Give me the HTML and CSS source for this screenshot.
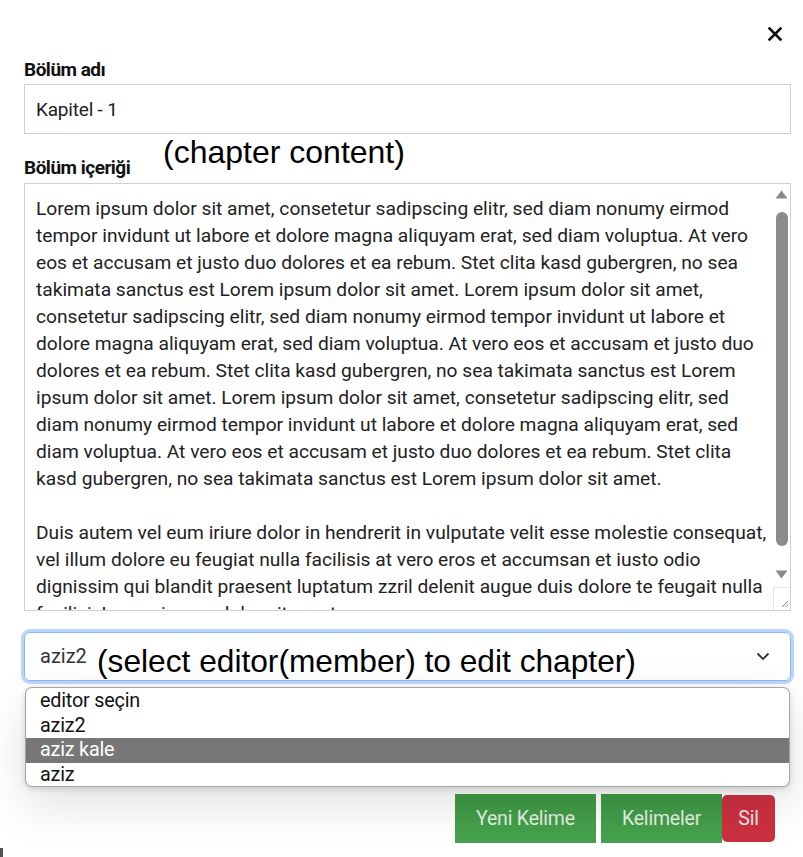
FILE: index.html
```html
<!DOCTYPE html>
<html lang="tr">
<head>
<meta charset="utf-8">
<title>Bölüm düzenle</title>
<link rel="stylesheet" href="styles.css">
</head>
<body>
<div class="modal">
  <div class="modal-header">
    <button class="close" aria-label="Kapat">
      <svg width="14" height="14" viewBox="0 0 14 14"><path d="M1.5 1.5 L12.5 12.5 M12.5 1.5 L1.5 12.5" stroke="#111" stroke-width="2.6" stroke-linecap="square"/></svg>
    </button>
  </div>
  <label class="label label-name">Bölüm adı</label>
  <input class="input" type="text" value="Kapitel - 1">
  <div class="label-row">
    <label class="label label-content">Bölüm içeriği</label>
    <span class="note note-content">(chapter content)</span>
  </div>
  <div class="textarea-box">
    <textarea class="textarea">Lorem ipsum dolor sit amet, consetetur sadipscing elitr, sed diam nonumy eirmod tempor invidunt ut labore et dolore magna aliquyam erat, sed diam voluptua. At vero eos et accusam et justo duo dolores et ea rebum. Stet clita kasd gubergren, no sea takimata sanctus est Lorem ipsum dolor sit amet. Lorem ipsum dolor sit amet, consetetur sadipscing elitr, sed diam nonumy eirmod tempor invidunt ut labore et dolore magna aliquyam erat, sed diam voluptua. At vero eos et accusam et justo duo dolores et ea rebum. Stet clita kasd gubergren, no sea takimata sanctus est Lorem ipsum dolor sit amet. Lorem ipsum dolor sit amet, consetetur sadipscing elitr, sed diam nonumy eirmod tempor invidunt ut labore et dolore magna aliquyam erat, sed diam voluptua. At vero eos et accusam et justo duo dolores et ea rebum. Stet clita kasd gubergren, no sea takimata sanctus est Lorem ipsum dolor sit amet.

Duis autem vel eum iriure dolor in hendrerit in vulputate velit esse molestie consequat, vel illum dolore eu feugiat nulla facilisis at vero eros et accumsan et iusto odio dignissim qui blandit praesent luptatum zzril delenit augue duis dolore te feugait nulla facilisi. Lorem ipsum dolor sit amet.</textarea>
    <div class="scrollbar">
      <svg class="sb-arrow" width="13" height="9" viewBox="0 0 13 9"><path d="M6.5 0.5 L12.5 8.5 L0.5 8.5 Z" fill="#8a8a8a"/></svg>
      <div class="sb-thumb"></div>
      <svg class="sb-arrow sb-down" width="13" height="9" viewBox="0 0 13 9"><path d="M0.5 0.5 L12.5 0.5 L6.5 8.5 Z" fill="#8a8a8a"/></svg>
      <div class="sb-corner">
        <svg width="10" height="10" viewBox="0 0 10 10"><path d="M9 3 L3 9 M9 6.5 L6.5 9" stroke="#8a8a8a" stroke-width="1"/></svg>
      </div>
    </div>
  </div>
  <div class="select">
    <span class="select-value">aziz2</span>
    <span class="note note-select">(select editor(member) to edit chapter)</span>
    <svg class="chevron" width="14" height="9" viewBox="0 0 14 9"><path d="M1.5 1.5 L7 7 L12.5 1.5" fill="none" stroke="#333" stroke-width="1.8"/></svg>
  </div>
  <ul class="options">
    <li class="option">editor seçin</li>
    <li class="option">aziz2</li>
    <li class="option option-active">aziz kale</li>
    <li class="option">aziz</li>
  </ul>
  <div class="actions">
    <button class="btn btn-green btn-new">Yeni Kelime</button>
    <button class="btn btn-green btn-words">Kelimeler</button>
    <button class="btn btn-red">Sil</button>
  </div>
</div>
<div class="corner-mark"></div>
</body>
</html>
```

FILE: styles.css
```css
* { box-sizing: border-box; }
html, body {
  margin: 0;
  padding: 0;
  background: #ffffff;
  height: 857px;
  overflow: hidden;
}
body {
  font-family: Roboto, "Noto Sans", sans-serif;
  color: #212529;
  position: relative;
}
.modal {
  padding: 0 12px 0 24px;
  display: flex;
  flex-direction: column;
}
.modal-header {
  height: 58px;
  display: flex;
  justify-content: flex-end;
  align-items: flex-start;
  padding-top: 27px;
  padding-right: 9px;
}
.close {
  border: 0;
  background: none;
  padding: 0;
  width: 14px;
  height: 14px;
  display: block;
}
.close svg { display: block; }
.label {
  display: block;
  font-weight: 700;
  font-size: 19px;
  color: #111;
  letter-spacing: -0.5px;
}
.label-name {
  height: 26px;
  line-height: 24px;
}
.input {
  height: 50px;
  border: 1px solid #cfcfcf;
  border-radius: 0;
  padding: 0 11px;
  font-family: Roboto, sans-serif;
  font-size: 19px;
  color: #222;
  letter-spacing: -0.2px;
  outline: none;
  width: 100%;
}
.label-row {
  height: 49px;
  position: relative;
  display: flex;
  align-items: flex-end;
  padding-bottom: 3px;
}
.label-content {
  line-height: 24px;
}
.note {
  position: absolute;
  font-family: "Liberation Sans", Arial, sans-serif;
  font-size: 32px;
  color: #000;
  white-space: nowrap;
  font-weight: 400;
  letter-spacing: 0;
  line-height: 37px;
}
.note-content {
  left: 139px;
  top: 0;
}
.textarea-box {
  height: 428px;
  border: 1px solid #cfcfcf;
  display: flex;
}
.textarea {
  flex: 1 1 0;
  min-width: 0;
  height: 100%;
  border: 0;
  padding: 11px 6px 11px 11px;
  font-family: Roboto, sans-serif;
  font-size: 19.2px;
  line-height: 27px;
  color: #222;
  resize: none;
  outline: none;
  overflow: hidden;
  background: #fff;
}
.scrollbar {
  flex: none;
  width: 17px;
  display: flex;
  flex-direction: column;
  align-items: center;
  padding-top: 6px;
}
.sb-arrow { display: block; flex: none; }
.sb-thumb {
  flex: none;
  width: 12px;
  height: 334px;
  margin-top: 13px;
  border-radius: 6px;
  background: #8c8c8c;
}
.sb-down {
  margin-top: 24px;
}
.sb-corner {
  margin-top: auto;
  align-self: stretch;
  height: 23px;
  border-top: 1px solid #e4e4e4;
  border-left: 1px solid #e4e4e4;
  display: flex;
  align-items: flex-end;
  justify-content: flex-end;
  padding: 0 1px 2px 0;
}
.sb-corner svg { display: block; }
.select {
  margin-top: 21px;
  height: 49px;
  border: 1px solid #86b7fe;
  border-radius: 6px;
  box-shadow: 0 0 0 3px #bcd5fb;
  position: relative;
  display: flex;
  align-items: center;
  padding: 0 15px;
}
.select-value {
  font-size: 20px;
  color: #333;
  margin-top: -2px;
}
.note-select {
  left: 72px;
  top: 10px;
  font-size: 31.7px;
}
.chevron {
  margin-left: auto;
  margin-right: 5px;
}
.options {
  list-style: none;
  margin: 6px 1px 0 1px;
  padding: 1px 0;
  height: 100px;
  border: 1px solid #a6a6a6;
  border-left-color: #9aaa9a;
  border-radius: 7px;
  background: #fff;
  overflow: hidden;
  box-shadow: 0 18px 50px rgba(0,0,0,0.12), 0 2px 6px rgba(0,0,0,0.15);
  position: relative;
  z-index: 1;
}
.option {
  height: 24.5px;
  line-height: 24px;
  padding: 0 14px;
  font-size: 19.8px;
  color: #111;
  letter-spacing: -0.2px;
}
.option-active {
  background: #777777;
  color: #fff;
}
.actions {
  margin-top: 7px;
  display: flex;
  justify-content: flex-end;
  align-items: center;
  padding-right: 16px;
}
.btn {
  border: 0;
  font-family: Roboto, sans-serif;
  font-size: 19.5px;
  color: #e3efe3;
  height: 49px;
  letter-spacing: -0.2px;
  padding: 0;
}
.btn-green {
  background: linear-gradient(#3f9845, #46a34c);
}
.btn-new {
  width: 141px;
  margin-right: 5px;
}
.btn-words {
  width: 121px;
}
.btn-red {
  background: #cc3040;
  width: 53px;
  height: 47px;
  border-radius: 5px;
  color: #f2e6e8;
}
.corner-mark {
  position: absolute;
  left: 0;
  top: 848px;
  width: 3px;
  height: 9px;
  background: #555;
}
```
